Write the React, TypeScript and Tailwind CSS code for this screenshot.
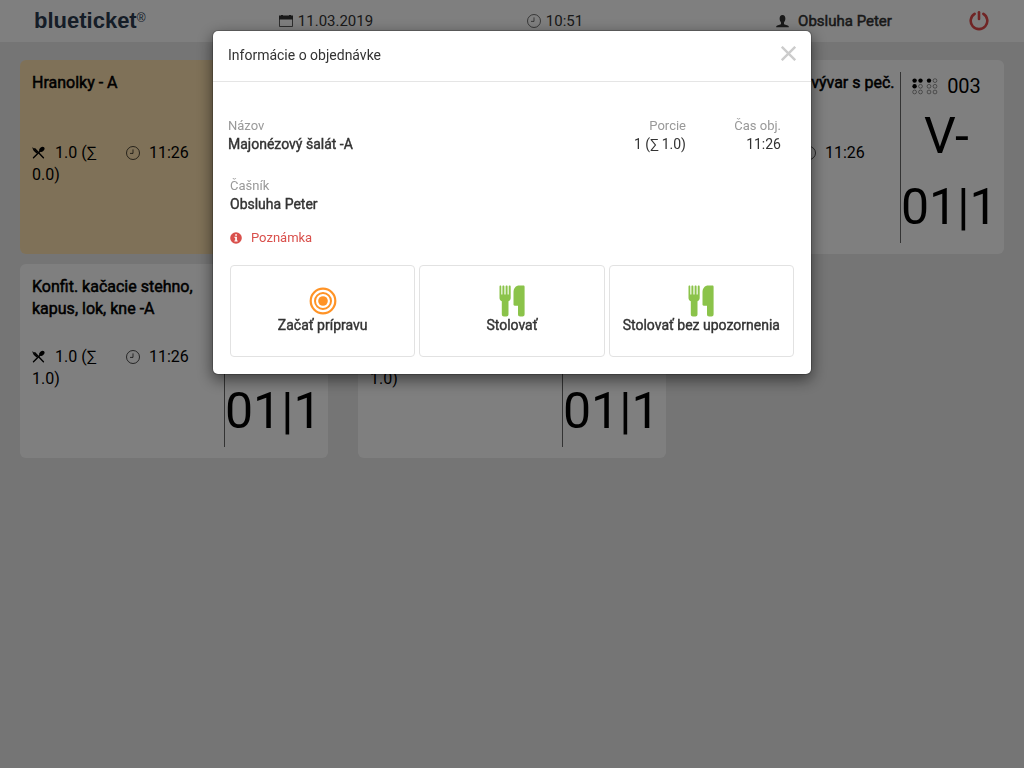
import { ReactNode } from "react";

type Order = {
  name: string;
  portions: string;
  sum: string;
  time: string;
  number: string;
  place: string;
  active?: boolean;
};

const orders: Order[] = [
  { name: "Hranolky - A", portions: "1.0", sum: "0.0", time: "11:26", number: "003", place: "V-01|1", active: true },
  { name: "Majonézový šalát -A", portions: "1.0", sum: "1.0", time: "11:26", number: "003", place: "V-01|1" },
  { name: "Polievka: Hov. vývar s peč.", portions: "1.0", sum: "1.0", time: "11:26", number: "003", place: "V-01|1" },
  { name: "Konfit. kačacie stehno, kapus, lok, kne -A", portions: "1.0", sum: "1.0", time: "11:26", number: "003", place: "V-01|1" },
  { name: "Hranolky - A", portions: "1.0", sum: "1.0", time: "11:26", number: "003", place: "V-01|1" },
];

function CalendarIcon() {
  return (
    <svg width="14" height="14" viewBox="0 0 14 14" aria-hidden="true">
      <path d="M0 1.500h2V1h2v.5h6V1h2v.5h2v4H0z" fill="currentColor" />
      <path d="M0.5 5v7.500h13V5" fill="none" stroke="currentColor" strokeWidth="0.800" />
    </svg>
  );
}

function ClockIcon() {
  return (
    <svg width="14" height="14" viewBox="0 0 14 14" fill="none" stroke="currentColor" strokeWidth="0.7" aria-hidden="true">
      <circle cx="7" cy="7" r="6.500" />
      <path d="M7 3.400v4H4" />
    </svg>
  );
}

function UserIcon() {
  return (
    <svg width="13" height="13" viewBox="0 0 14 14" fill="currentColor" aria-hidden="true">
      <path d="M7 0c2.100 0 3.100 1.700 3.100 3.900 0 1.700-.6 3.200-1.500 4.100v1.400c0 .4.300.7.700.9l3.300 1c.8.300 1.200.7 1.200 1.400v.6H.2v-.6c0-.7.4-1.100 1.200-1.400l3.300-1c.4-.2.7-.5.7-.9V8C4.500 7.100 3.900 5.600 3.900 3.900 3.900 1.700 4.900 0 7 0z" />
    </svg>
  );
}

function PowerIcon() {
  return (
    <svg width="20" height="20" viewBox="0 0 20 20" fill="none" stroke="currentColor" strokeWidth="2.600" strokeLinecap="round" aria-hidden="true">
      <path d="M5.600 2.800a8.300 8.300 0 1 0 8.800 0" />
      <path d="M10 1.300v6.700" />
    </svg>
  );
}

function CrossedCutleryIcon() {
  return (
    <svg width="13" height="13" viewBox="0 0 14 14" aria-hidden="true">
      <path d="M3 3l9.300 9.600M10 4.200L1.600 12.600" stroke="currentColor" strokeWidth="1.500" strokeLinecap="round" />
      <path d="M.4 1.200l5.900 5.900-1.300 1C2.200 6.300.5 4 .4 1.200z" fill="currentColor" />
      <ellipse cx="10.600" cy="3.600" rx="3.200" ry="2.300" transform="rotate(-42 10.600 3.600)" fill="currentColor" />
    </svg>
  );
}

function DotsIcon() {
  return (
    <svg width="26" height="17" viewBox="0 0 26 17" aria-hidden="true">
      <g fill="currentColor">
        <circle cx="2.600" cy="2.600" r="2.200" />
        <circle cx="8.500" cy="2.600" r="2.200" />
        <circle cx="2.600" cy="8.300" r="2.200" />
        <circle cx="17" cy="2.600" r="2.200" />
      </g>
      <g fill="none" stroke="currentColor" strokeWidth="0.400">
        <circle cx="8.500" cy="8.300" r="1.900" />
        <circle cx="2.600" cy="14" r="1.900" />
        <circle cx="8.500" cy="14" r="1.900" />
        <circle cx="23" cy="2.600" r="1.900" />
        <circle cx="17" cy="8.300" r="1.900" />
        <circle cx="23" cy="8.300" r="1.900" />
        <circle cx="17" cy="14" r="1.900" />
        <circle cx="23" cy="14" r="1.900" />
      </g>
    </svg>
  );
}

function TargetIcon() {
  return (
    <svg width="28" height="28" viewBox="0 0 28 28" fill="none" stroke="#ff9326" aria-hidden="true">
      <circle cx="14" cy="14" r="12.300" strokeWidth="2.200" />
      <circle cx="14" cy="14" r="8" strokeWidth="2" />
      <circle cx="14" cy="14" r="4.800" fill="#ff9326" stroke="none" />
    </svg>
  );
}

function CutleryIcon() {
  return (
    <svg width="26" height="32" viewBox="0 0 26 32" fill="#8bc34a" aria-hidden="true">
      <path d="M1.400.5c.6 0 .9.500.9 1v8h1.100v-8c0-.6.400-1 1-1s1 .4 1 1v8h1.200v-8c0-.6.400-1 1-1s1 .4 1 1v8h1.100v-8c0-.5.400-1 1-1s1 .5 1 1V13c0 1.600-.9 2.600-2.200 3.200v13.100c0 1.400-.9 2.200-2.100 2.200H4.900c-1.200 0-2.100-.8-2.100-2.200V16.200C1.400 15.600.5 14.600.5 13V1.500c0-.5.300-1 .9-1z" />
      <path d="M20.500.5h3.900c.7 0 1.200.5 1.200 1.200v27.600c0 1.400-.9 2.200-2.100 2.200h-2.400c-1.300 0-2.100-.8-2.100-2.200v-8.500h-3.300c-.7 0-1.200-.5-1.200-1.200V7.500c0-4.300 2.100-7 6-7z" />
    </svg>
  );
}

function InfoIcon() {
  return (
    <svg width="12" height="12" viewBox="0 0 12 12" aria-hidden="true">
      <circle cx="6" cy="6" r="5.800" fill="currentColor" />
      <path d="M5.200 2.200h1.700v1.500H5.200zM4.400 4.800h2.500v3.700h.8v1H4.400v-1h.8V5.800h-.8z" fill="#fff" />
    </svg>
  );
}

function OrderCard({ order }: { order: Order }) {
  return (
    <article
      className={`flex rounded-md px-3 pt-3 pb-[11px] text-black ${order.active ? "bg-[#ffe3b0]" : "bg-white"}`}
    >
      <div className="min-w-0 flex-1 pr-1">
        <h2 className="min-h-[70px] text-base leading-[22px] [-webkit-text-stroke:0.5px]">
          {order.name}
        </h2>
        <div className="grid grid-cols-2 text-base leading-[22px]">
          <p className="pr-4">
            <span className="mr-[10px] inline-block align-[-1px]">
              <CrossedCutleryIcon />
            </span>
            {order.portions} (∑ {order.sum})
          </p>
          <p>
            <span className="mr-[9px] inline-block align-[-2px]">
              <ClockIcon />
            </span>
            {order.time}
          </p>
        </div>
      </div>
      <div className="w-[92px] border-l border-black/60 text-center">
        <div className="flex items-center justify-center gap-[9px] text-xl leading-[29px]">
          <DotsIcon />
          {order.number}
        </div>
        <div className="text-[50px] leading-[71px]">{order.place}</div>
      </div>
    </article>
  );
}

function ActionButton({ icon, label }: { icon: ReactNode; label: string }) {
  return (
    <button
      type="button"
      className="flex h-[92px] flex-col items-center justify-center rounded border border-[#e2e2e2] bg-white pb-[2px] text-sm leading-[18px] [-webkit-text-stroke:0.4px]"
    >
      <span className="flex h-[30px] items-center">{icon}</span>
      {label}
    </button>
  );
}

export default function App() {
  return (
    <div className="min-h-screen bg-[#ebebeb] font-[Roboto,sans-serif] text-[#333]">
      <header className="grid h-[42px] grid-cols-[276fr_100fr_358fr_200fr_90fr] items-center bg-white text-[15px]">
        <a href="#" className="pl-[34px] font-['Liberation_Sans',sans-serif] text-[22px] leading-6 font-bold text-[#2b3a4f]">
          blueticket<sup className="text-xs font-normal">®</sup>
        </a>
        <div className="flex items-center justify-center gap-[5px]">
          <CalendarIcon />
          11.03.2019
        </div>
        <div className="flex items-center justify-center gap-[5px]">
          <ClockIcon />
          10:51
        </div>
        <div className="flex items-center justify-center gap-[9px] [-webkit-text-stroke:0.5px]">
          <UserIcon />
          Obsluha Peter
        </div>
        <button type="button" aria-label="Odhlásiť" className="justify-self-center text-[#e04a4a]">
          <PowerIcon />
        </button>
      </header>

      <main className="grid grid-cols-3 gap-x-[30px] gap-y-[10px] px-5 pt-[18px]">
        {orders.map((order, index) => (
          <OrderCard key={index} order={order} />
        ))}
      </main>

      <div className="fixed inset-0 overflow-y-auto bg-black/50">
        <div
          role="dialog"
          aria-modal="true"
          aria-labelledby="order-title"
          className="mx-auto mt-[30px] max-w-[600px] rounded-md border border-black/20 bg-white bg-clip-padding shadow-[0_5px_15px_rgba(0,0,0,0.5)]"
        >
          <div className="flex h-[51px] items-start justify-between border-b border-[#e5e5e5] px-[15px] pt-[15px]">
            <h1 id="order-title" className="text-sm leading-[18px]">
              Informácie o objednávke
            </h1>
            <button type="button" aria-label="Zavrieť" className="text-[#cccccc]">
              <svg width="15" height="15" viewBox="0 0 15 15" stroke="currentColor" strokeWidth="2.400" aria-hidden="true">
                <path d="M.8.8l13.400 13.400M14.200.8L.8 14.200" />
              </svg>
            </button>
          </div>

          <div className="px-[15px] pt-[35px] pb-[17px]">
            <table className="w-full">
              <thead>
                <tr className="text-[13px] leading-[18px] text-[#999]">
                  <th className="text-left font-normal">Názov</th>
                  <th className="w-[95px] text-right font-normal">Porcie</th>
                  <th className="w-[110px] pr-[15px] text-right font-normal">Čas obj.</th>
                </tr>
              </thead>
              <tbody>
                <tr className="text-sm leading-[18px]">
                  <td className="[-webkit-text-stroke:0.4px]">Majonézový šalát -A</td>
                  <td className="text-right">1 (∑ 1.0)</td>
                  <td className="pr-[15px] text-right">11:26</td>
                </tr>
              </tbody>
            </table>

            <div className="px-[2px] pt-6">
              <p className="text-[13px] leading-[18px] text-[#999]">Čašník</p>
              <p className="text-sm leading-[18px] [-webkit-text-stroke:0.4px]">Obsluha Peter</p>
              <p className="mt-4 flex items-center gap-[9px] text-[13px] leading-[18px] text-[#d9504c]">
                <InfoIcon />
                Poznámka
              </p>
              <div className="mt-[18px] grid grid-cols-3 gap-1">
                <ActionButton icon={<TargetIcon />} label="Začať prípravu" />
                <ActionButton icon={<CutleryIcon />} label="Stolovať" />
                <ActionButton icon={<CutleryIcon />} label="Stolovať bez upozornenia" />
              </div>
            </div>
          </div>
        </div>
      </div>
    </div>
  );
}
